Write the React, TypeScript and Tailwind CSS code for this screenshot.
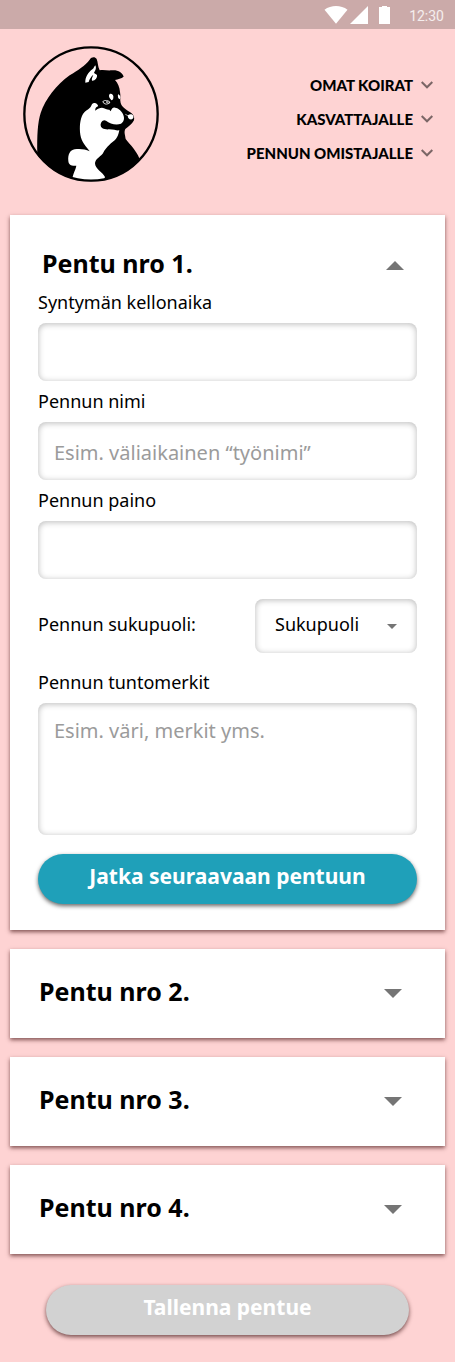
import { useState } from "react";

const inset =
  "w-full rounded-lg bg-white text-lg text-black shadow-[inset_0_1px_6px_rgba(0,0,0,0.28)] outline-none placeholder:text-xl placeholder:text-[#9b9b9b] focus:ring-2 focus:ring-[#1fa0b9]";

function DogLogo() {
  return (
    <svg viewBox="24 24 408 408" className="size-[136px] shrink-0" role="img" aria-label="Koira">
      <defs>
        <clipPath id="badge">
          <circle cx="228" cy="228" r="202" />
        </clipPath>
      </defs>
      <g clipPath="url(#badge)">
        <path
          d="M67 350 C66 290 68 254 77 225 C91 183 124 141 164 112 C190 95 210 84 224 65 C230 56 240 56 245 63 C249 72 248 84 254 97 C266 94 278 99 290 97 C308 95 322 103 326 116 C319 122 309 123 300 126 C309 136 314 148 315 162 C318 174 314 184 317 195 C320 208 336 216 350 226 C356 231 359 239 357 247 C351 259 339 266 331 273 C326 283 331 292 332 303 C346 321 363 336 373 361 L340 432 L110 432 Z"
          fill="#000"
        />
        <path
          d="M240 195 C246 197 250 201 249 205 C242 207 240 212 241 218 C249 211 254 209 261 209 C270 210 277 216 283 215 L287 220 C290 212 293 208 300 209 C311 210 323 221 326 234 C329 243 325 253 318 257 C304 262 285 258 273 248 C264 242 256 254 257 262 C257 270 266 275 282 274 C298 274 305 279 313 277 C311 289 307 299 300 306 C283 319 269 334 263 347 C254 357 241 363 240 376 C240 393 263 403 270 417 L264 432 L172 432 C170 413 181 399 184 383 C171 385 161 381 160 369 C158 350 165 336 179 334 C194 332 210 333 224 340 C214 325 199 312 196 290 C193 266 195 244 204 228 C213 214 226 214 230 200 C233 196 236 195 240 195 Z"
          fill="#fff"
        />
        <path
          d="M241 82 C245 88 242 98 237 104 C239 108 245 107 246 112 C247 120 240 129 231 128 C229 122 233 116 235 110 C228 116 223 124 221 132 L211 134 C210 119 219 103 232 94 C237 91 237 86 241 82 Z"
          fill="#fff"
        />
        <path d="M284 168 C291 166 297 172 295 180 C294 186 290 189 287 184 C282 179 280 172 284 168 Z" fill="#fff" />
        <path d="M309 169 C315 171 318 178 314 184 C309 183 308 175 309 169 Z" fill="#fff" />
        <path d="M262 191 C269 184 280 185 286 193 C282 202 268 202 262 191 Z" fill="#ddd" />
        <path d="M265 191 C271 187 279 188 282 193 C277 199 269 198 265 191 Z" fill="#000" />
        <circle cx="276" cy="192" r="3" fill="#ccc" />
        <path d="M339 232 C344 227 353 228 355 234 C357 241 351 246 344 244 C340 241 337 237 339 232 Z" fill="#fff" />
        <path d="M331 229 L341 234" stroke="#fff" strokeWidth="2" />
      </g>
      <circle cx="228" cy="228" r="200" fill="none" stroke="#000" strokeWidth="7" />
    </svg>
  );
}

function Triangle({ up = false, small = false }: { up?: boolean; small?: boolean }) {
  return (
    <svg viewBox="0 0 18 9" className={small ? "h-[5px] w-[10px]" : "h-[9px] w-[18px]"} aria-hidden="true">
      <path d={up ? "M0 9 L9 0 L18 9 Z" : "M0 0 L18 0 L9 9 Z"} fill="#757575" />
    </svg>
  );
}

function StatusBar() {
  return (
    <div className="flex h-[29px] items-center justify-end bg-[#cbaaa9] pr-[11px]">
      <svg viewBox="0 0 68 18" className="mr-[17px] h-[18px] w-[68px]" fill="#fff" aria-hidden="true">
        <path d="M0.500 3.800 C7 -1.200 17 -1.200 23.500 3.800 L12 17.800 Z" />
        <path d="M26 18 L44 0 V18 Z" />
        <path d="M58 1 V0 H63 V1 H66 V18 H55 V1 Z" />
      </svg>
      <span className="pt-[3px] font-[Roboto,sans-serif] text-sm text-white/80">12:30</span>
    </div>
  );
}

function Nav() {
  return (
    <nav className="flex flex-col items-end">
      {["OMAT KOIRAT", "KASVATTAJALLE", "PENNUN OMISTAJALLE"].map((item) => (
        <a
          key={item}
          href="#"
          className="flex h-[34px] items-center gap-2 font-[Lato,sans-serif] text-[15px] font-black text-black"
        >
          {item}
          <svg viewBox="0 0 12 8" className="h-2 w-3" fill="none" stroke="#7b6666" strokeWidth="2" aria-hidden="true">
            <path d="M0.700 1 L6 6.300 L11.300 1" />
          </svg>
        </a>
      ))}
    </nav>
  );
}

function Field({ id, label, placeholder }: { id: string; label: string; placeholder?: string }) {
  return (
    <div className="flex flex-col gap-[9px]">
      <label htmlFor={id} className="text-lg leading-6">
        {label}
      </label>
      <input id={id} type="text" placeholder={placeholder} className={`${inset} h-[58px] px-4 pt-1`} />
    </div>
  );
}

function PuppyForm({ onNext }: { onNext: () => void }) {
  return (
    <form className="flex flex-col px-7 pb-[26px]" onSubmit={(e) => e.preventDefault()}>
      <div className="flex flex-col gap-2">
        <Field id="time" label="Syntymän kellonaika" />
        <Field id="name" label="Pennun nimi" placeholder="Esim. väliaikainen “työnimi”" />
        <Field id="weight" label="Pennun paino" />
      </div>
      <div className="mt-5 flex items-center justify-between">
        <label htmlFor="sex" className="pb-1 text-lg leading-6">
          Pennun sukupuoli:
        </label>
        <div className="relative w-[162px]">
          <select id="sex" defaultValue="" className={`${inset} h-[54px] appearance-none pr-8 pb-1 pl-5`}>
            <option value="">Sukupuoli</option>
            <option value="uros">Uros</option>
            <option value="narttu">Narttu</option>
          </select>
          <span className="pointer-events-none absolute inset-y-0 right-5 flex items-center">
            <Triangle small />
          </span>
        </div>
      </div>
      <div className="mt-[17px] flex flex-col gap-[9px]">
        <label htmlFor="marks" className="text-lg leading-6">
          Pennun tuntomerkit
        </label>
        <textarea
          id="marks"
          placeholder="Esim. väri, merkit yms."
          className={`${inset} block h-[132px] resize-none px-4 py-4 leading-6 placeholder:leading-6`}
        />
      </div>
      <button
        type="button"
        onClick={onNext}
        className="mt-[19px] h-[50px] rounded-full bg-[#1fa0b9] pb-1 text-[21px] font-bold text-white shadow-[0_2px_4px_rgba(0,0,0,0.6)]"
      >
        Jatka seuraavaan pentuun
      </button>
    </form>
  );
}

export default function App() {
  const [open, setOpen] = useState(1);
  return (
    <div className="min-h-screen bg-[#fed3d3] font-['Noto_Sans',sans-serif] text-black">
      <StatusBar />
      <header className="flex items-start justify-between pt-[17px] pr-[22px] pb-[33px] pl-[23px]">
        <DogLogo />
        <div className="pt-[22px]">
          <Nav />
        </div>
      </header>
      <main className="flex flex-col gap-[19px] px-[10px] pb-[27px]">
        {[1, 2, 3, 4].map((n) => (
          <section key={n} className="bg-white shadow-[0_2px_4px_rgba(80,30,30,0.7)]">
            <h2>
              <button
                type="button"
                aria-expanded={open === n}
                onClick={() => setOpen(open === n ? 0 : n)}
                className={`flex w-full items-center justify-between text-left text-[25px] font-bold ${
                  open === n ? "h-[75px] pt-[26px] pr-[41px] pl-8" : "h-[89px] pr-[43px] pl-[29px]"
                }`}
              >
                <span className="pb-1">Pentu nro {n}.</span>
                <Triangle up={open === n} />
              </button>
            </h2>
            {open === n && <PuppyForm onNext={() => setOpen(n + 1)} />}
          </section>
        ))}
        <button
          type="button"
          className="mx-9 mt-3 h-[50px] rounded-full bg-[#d2d2d2] pb-1 text-[21px] font-bold text-white shadow-[0_2px_4px_rgba(60,20,20,0.7)]"
        >
          Tallenna pentue
        </button>
      </main>
    </div>
  );
}
